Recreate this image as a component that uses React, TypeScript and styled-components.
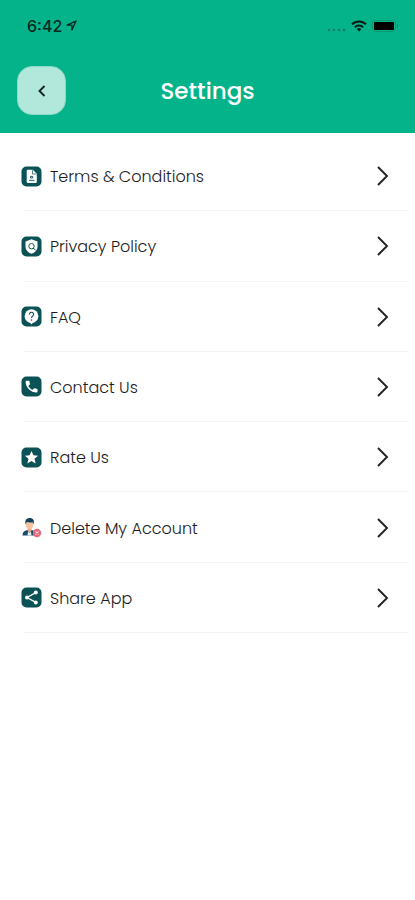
import React from 'react';
import styled, { createGlobalStyle } from 'styled-components';

const GlobalStyle = createGlobalStyle`
  * { box-sizing: border-box; }
  body {
    margin: 0;
    background: #fff;
    color: #1c1c1c;
    font-family: Poppins, Inter, sans-serif;
  }
`;

const Header = styled.header`
  background: #04b38a;
  padding-bottom: 18px;
`;

const StatusBar = styled.div`
  display: flex;
  align-items: center;
  justify-content: space-between;
  height: 51px;
  padding: 0 16px 0 27px;
  color: #06261e;
`;

const Clock = styled.div`
  display: flex;
  align-items: center;
  gap: 4px;
  font-family: Inter, sans-serif;
  font-size: 16px;
  font-weight: 500;
  line-height: 20px;
`;

const Indicators = styled.div`
  display: flex;
  align-items: center;
  gap: 5px;
`;

const TitleBar = styled.div`
  display: grid;
  grid-template-columns: 49px 1fr 49px;
  align-items: center;
  padding: 15px 17px 0;
`;

const BackButton = styled.button`
  display: flex;
  align-items: center;
  justify-content: center;
  width: 49px;
  height: 49px;
  padding: 0;
  border: 1px solid #8cdac6;
  border-radius: 15px;
  background: #b2e7db;
  color: #14231f;
  cursor: pointer;
`;

const Title = styled.h1`
  margin: 0;
  color: #fff;
  font-size: 23px;
  font-weight: 500;
  line-height: 32px;
  text-align: center;
`;

const Menu = styled.ul`
  display: grid;
  grid-auto-rows: 1fr;
  min-height: 492px;
  margin: 8px 7px 0 21px;
  padding: 0;
  list-style: none;
`;

const MenuItem = styled.li`
  display: flex;
  flex-direction: column;

  &::after {
    content: '';
    height: 1px;
    margin-left: 3px;
    background: #f3f3f3;
  }
`;

const MenuLink = styled.a`
  display: flex;
  flex: 1;
  align-items: center;
  gap: 8px;
  padding: 1px 19px 0 0;
  color: inherit;
  text-decoration: none;
`;

const Label = styled.span`
  flex: 1;
  padding-top: 2px;
  font-size: 16px;
  font-weight: 300;
  line-height: 24px;
`;

const Tile = ({ children }: { children: React.ReactNode }) => (
  <svg width="21" height="21" viewBox="0 0 21 21" aria-hidden="true">
    <rect x="0.5" y="0.5" width="20" height="20" rx="5" fill="#0b5257" />
    {children}
  </svg>
);

const TermsIcon = () => (
  <Tile>
    <path d="M7 3.700h4.800l4 4v8a1.300 1.300 0 0 1-1.300 1.300H7a1.300 1.300 0 0 1-1.300-1.300v-10.700A1.300 1.300 0 0 1 7 3.700z" fill="#fff" />
    <path d="M11.500 4.200v3.800h3.800" fill="none" stroke="#0b5257" strokeWidth="0.700" />
    <path d="M8 14.300h5.500M9.500 12h2.200v-1.600H9.500z" fill="none" stroke="#0b5257" strokeWidth="0.900" />
  </Tile>
);

const PrivacyIcon = () => (
  <Tile>
    <path d="M10.5 3.200l6 2.200v5c0 3.500-2.500 6-6 7.400-3.500-1.400-6-3.900-6-7.400v-5z" fill="#fff" />
    <circle cx="10.500" cy="10.200" r="2.700" fill="none" stroke="#0b5257" strokeWidth="1" />
    <path d="M12.300 12l2.300 2.300" stroke="#0b5257" strokeWidth="1" />
  </Tile>
);

const FaqIcon = () => (
  <Tile>
    <circle cx="10.5" cy="10.200" r="6.900" fill="#fff" />
    <path d="M8.500 16h4l-2 2.500z" fill="#fff" />
    <path d="M8.400 8.400a2.100 2.100 0 1 1 3.200 1.800c-.8.500-1.100.9-1.100 1.800" fill="none" stroke="#0b5257" strokeWidth="1.100" />
    <circle cx="10.5" cy="14" r="0.800" fill="#0b5257" />
  </Tile>
);

const ContactIcon = () => (
  <Tile>
    <path
      d="M5.300 4.800h2.600c.4 0 .7.3.7.7 0 .8.1 1.600.4 2.300.1.300 0 .5-.2.7L7.300 10a10.200 10.200 0 0 0 4 4l1.500-1.500c.2-.2.5-.3.7-.2.7.3 1.500.4 2.300.4.4 0 .7.3.7.7v2.400c0 .4-.3.7-.7.7C9.700 16.500 4.600 11.500 4.600 5.500c0-.4.300-.7.700-.7z"
      fill="#fff"
    />
  </Tile>
);

const RateIcon = () => (
  <Tile>
    <path d="M10.500 4l1.900 4.300 4.700.4-3.600 3.100 1.100 4.600-4.100-2.400-4.100 2.400 1.100-4.600L3.900 8.700l4.700-.4z" fill="#fff" />
  </Tile>
);

const ShareIcon = () => (
  <Tile>
    <path d="M14.800 5.600L6 10.500l8.800 4.900" fill="none" stroke="#fff" strokeWidth="1.300" />
    <circle cx="14.800" cy="5.600" r="2" fill="#fff" />
    <circle cx="6" cy="10.500" r="2" fill="#fff" />
    <circle cx="14.800" cy="15.400" r="2" fill="#fff" />
  </Tile>
);

const DeleteIcon = () => (
  <svg width="21" height="21" viewBox="0 0 21 21" aria-hidden="true">
    <path d="M1.500 18.500c0-4 2.500-5.500 7-5.800 4.500.3 7 1.800 7 5.800z" fill="#174b68" />
    <path d="M6.500 11h4v2.800l-2 1.800-2-1.800z" fill="#e9ad8c" />
    <path d="M7 14.500l1.500 1.200 1.500-1.200.500 4h-4z" fill="#e4eef2" />
    <ellipse cx="8.500" cy="7.800" rx="3.600" ry="4.300" fill="#f4c3a3" />
    <path d="M4.600 7.500C3.500 3 5.800 1 8.800 1c3.200 0 5 2.300 3.700 6.500l-.9-2.300c-2 .4-4.200.2-5.800-.3z" fill="#173f59" />
    <circle cx="16" cy="16" r="4.200" fill="#e8697a" />
    <path d="M14.400 14.400l3.200 3.200m0-3.200l-3.200 3.200" stroke="#fbd5da" strokeWidth="1.100" />
  </svg>
);

const items: { label: string; icon: React.ReactNode }[] = [
  { label: 'Terms & Conditions', icon: <TermsIcon /> },
  { label: 'Privacy Policy', icon: <PrivacyIcon /> },
  { label: 'FAQ', icon: <FaqIcon /> },
  { label: 'Contact Us', icon: <ContactIcon /> },
  { label: 'Rate Us', icon: <RateIcon /> },
  { label: 'Delete My Account', icon: <DeleteIcon /> },
  { label: 'Share App', icon: <ShareIcon /> },
];

export default function App() {
  return (
    <>
      <GlobalStyle />
      <Header>
        <StatusBar>
          <Clock>
            6:42
            <svg width="11" height="11" viewBox="0 0 11 11" aria-hidden="true">
              <path d="M1 5.200L10 1 5.900 10V5.200z" fill="none" stroke="currentColor" strokeWidth="1.300" strokeLinejoin="round" />
            </svg>
          </Clock>
          <Indicators>
            <svg width="19" height="12" viewBox="0 0 19 12" aria-hidden="true">
              <g fill="#078064">
                <circle cx="2" cy="10" r="1.300" />
                <circle cx="7" cy="10" r="1.300" />
                <circle cx="12" cy="10" r="1.300" />
                <circle cx="17" cy="10" r="1.300" />
              </g>
            </svg>
            <svg width="16" height="12" viewBox="0 0 16 12" aria-hidden="true">
              <g fill="none" stroke="#031b15" strokeWidth="2">
                <path d="M1 4.300a10 10 0 0 1 14 0" />
                <path d="M3.800 7.200a6 6 0 0 1 8.400 0" />
              </g>
              <path d="M5.800 9.200a3.100 3.100 0 0 1 4.400 0L8 11.500z" fill="#031b15" />
            </svg>
            <svg width="27" height="12" viewBox="0 0 27 12" aria-hidden="true">
              <rect x="0.500" y="0.500" width="23" height="11" rx="3" fill="none" stroke="#079672" />
              <rect x="2" y="2" width="20" height="8" rx="1" fill="#000" />
              <path d="M25 4c1.500.7 1.500 3.300 0 4z" fill="#078064" />
            </svg>
          </Indicators>
        </StatusBar>
        <TitleBar>
          <BackButton type="button" aria-label="Back">
            <svg width="12" height="14" viewBox="0 0 12 14" aria-hidden="true">
              <path d="M8.500 2L3.500 7l5 5" fill="none" stroke="currentColor" strokeWidth="1.900" />
            </svg>
          </BackButton>
          <Title>Settings</Title>
        </TitleBar>
      </Header>
      <main>
        <Menu>
          {items.map(({ label, icon }) => (
            <MenuItem key={label}>
              <MenuLink href="#">
                {icon}
                <Label>{label}</Label>
                <svg width="13" height="22" viewBox="0 0 13 22" aria-hidden="true">
                  <path d="M2 2l9 9-9 9" fill="none" stroke="#222" strokeWidth="1.900" />
                </svg>
              </MenuLink>
            </MenuItem>
          ))}
        </Menu>
      </main>
    </>
  );
}
